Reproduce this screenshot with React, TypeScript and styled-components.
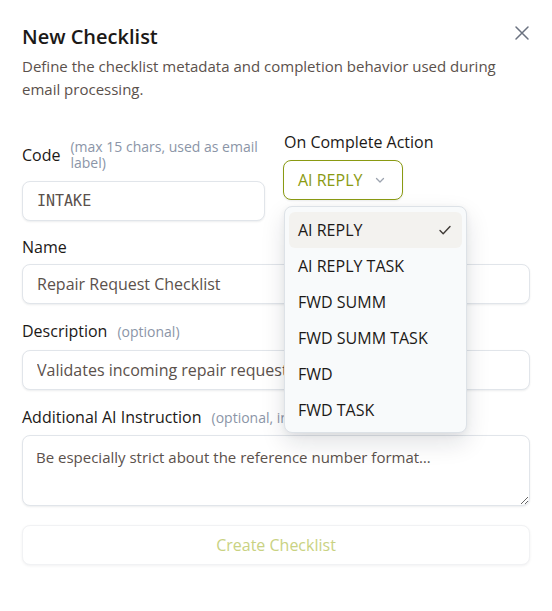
import styled, { createGlobalStyle } from 'styled-components'

const GlobalStyle = createGlobalStyle`
  html, body {
    margin: 0;
    padding: 0;
    background: #ffffff;
  }
  * {
    box-sizing: border-box;
  }
`

const accent = '#8a9a12'
const ink = '#1c1917'
const muted = '#5b514c'
const hintGray = '#8b95a7'
const line = '#e1e5ea'

const Dialog = styled.div`
  width: 552px;
  min-height: 611px;
  background: #ffffff;
  padding: 23px 22px 40px 22px;
  font-family: 'Open Sans', 'Noto Sans', sans-serif;
  color: ${ink};
  position: relative;
`

const Header = styled.div`
  display: flex;
  flex-direction: column;
  gap: 4px;
  margin-bottom: 30px;
`

const Title = styled.h2`
  margin: 0;
  font-size: 20px;
  line-height: 28px;
  font-weight: 600;
  color: ${ink};
`

const Subtitle = styled.p`
  margin: 0;
  font-size: 15px;
  line-height: 23px;
  color: ${muted};
`

const CloseButton = styled.button`
  position: absolute;
  top: 25px;
  right: 22px;
  width: 16px;
  height: 16px;
  padding: 0;
  border: none;
  background: none;
  color: #6b7280;
  display: flex;
  align-items: center;
  justify-content: center;
  cursor: pointer;
`

const Form = styled.div`
  display: flex;
  flex-direction: column;
  gap: 16px;
`

const TopRow = styled.div`
  display: grid;
  grid-template-columns: 243px 1fr;
  column-gap: 19px;
  align-items: start;
  margin-bottom: -1px;
`

const Field = styled.div<{ $gap?: number; $offset?: number }>`
  display: flex;
  flex-direction: column;
  gap: ${p => p.$gap ?? 6}px;
  margin-top: ${p => p.$offset ?? 0}px;
  position: relative;
`

const LabelRow = styled.div<{ $center?: boolean }>`
  display: flex;
  align-items: ${p => (p.$center ? 'center' : 'baseline')};
  gap: 10px;
  min-height: 22px;
`

const Label = styled.label`
  font-size: 16px;
  line-height: 22px;
  color: ${ink};
  white-space: nowrap;
`

const Hint = styled.span`
  font-size: 14px;
  line-height: 16px;
  color: ${hintGray};
`

const inputBase = `
  width: 100%;
  border: 1px solid ${line};
  border-radius: 8px;
  background: #ffffff;
  box-shadow: 0 1px 2px rgba(15, 23, 42, 0.08);
  outline: none;
`

const TextInput = styled.input<{ $mono?: boolean }>`
  ${inputBase}
  height: 40px;
  padding: 0 14px;
  font-family: ${p =>
    p.$mono ? "'DejaVu Sans Mono', 'Liberation Mono', monospace" : "'Open Sans', sans-serif"};
  font-size: ${p => (p.$mono ? 15 : 16)}px;
  color: ${muted};
`

const TextArea = styled.textarea`
  ${inputBase}
  height: 71px;
  padding: 10px 13px;
  font-family: 'Open Sans', sans-serif;
  font-size: 15px;
  line-height: 22px;
  color: ${muted};
  resize: vertical;
`

const SelectWrap = styled.div`
  position: relative;
  align-self: flex-start;
  margin-top: 1px;
`

const SelectButton = styled.button`
  height: 40px;
  display: flex;
  align-items: center;
  gap: 12px;
  padding: 0 16px 0 14px;
  border: 1px solid ${accent};
  border-radius: 8px;
  background: #ffffff;
  box-shadow: 0 1px 2px rgba(15, 23, 42, 0.08);
  font-family: 'Open Sans', sans-serif;
  font-size: 16px;
  color: ${accent};
  margin-left: -1px;
`

const Menu = styled.ul`
  position: absolute;
  top: 46px;
  left: 0;
  width: 183px;
  margin: 0;
  padding: 5px 4px 4px 4px;
  list-style: none;
  background: #f8fafb;
  border: 1px solid #dde2e7;
  border-radius: 8px;
  box-shadow: 0 10px 24px rgba(15, 23, 42, 0.12), 0 2px 6px rgba(15, 23, 42, 0.06);
  z-index: 10;
`

const MenuItem = styled.li<{ $active?: boolean }>`
  height: 36px;
  display: flex;
  align-items: center;
  justify-content: space-between;
  padding: 0 10px 0 9px;
  border-radius: 6px;
  font-size: 16px;
  color: ${ink};
  background: ${p => (p.$active ? '#f3f2ef' : 'transparent')};
`

const SubmitButton = styled.button`
  margin-top: 3px;
  height: 40px;
  width: 100%;
  border: 1px solid #f1f2f4;
  border-radius: 8px;
  background: #ffffff;
  box-shadow: 0 1px 3px rgba(15, 23, 42, 0.06);
  font-family: 'Open Sans', sans-serif;
  font-size: 16px;
  font-weight: 500;
  color: #c9d282;
`

const actions = ['AI REPLY', 'AI REPLY TASK', 'FWD SUMM', 'FWD SUMM TASK', 'FWD', 'FWD TASK']

export default function App() {
  const selected = 'AI REPLY'

  return (
    <>
      <GlobalStyle />
      <Dialog>
        <Header>
          <Title>New Checklist</Title>
          <Subtitle>
            Define the checklist metadata and completion behavior used during email processing.
          </Subtitle>
        </Header>
        <CloseButton aria-label="Close">
          <svg width="16" height="16" viewBox="0 0 16 16" fill="none" stroke="currentColor" strokeWidth="1.5" strokeLinecap="round">
            <path d="M2 2l12 12M14 2L2 14" />
          </svg>
        </CloseButton>

        <Form>
          <TopRow>
            <Field $gap={10} $offset={8}>
              <LabelRow $center>
                <Label>Code</Label>
                <Hint>(max 15 chars, used as email label)</Hint>
              </LabelRow>
              <TextInput $mono defaultValue="INTAKE" />
            </Field>
            <Field>
              <LabelRow>
                <Label>On Complete Action</Label>
              </LabelRow>
              <SelectWrap>
                <SelectButton>
                  {selected}
                  <svg width="12" height="12" viewBox="0 0 12 12" fill="none" stroke="#9ca3af" strokeWidth="1.3" strokeLinecap="round" strokeLinejoin="round">
                    <path d="M2.5 4.5L6 8l3.5-3.5" />
                  </svg>
                </SelectButton>
                <Menu>
                  {actions.map(a => (
                    <MenuItem key={a} $active={a === selected}>
                      {a}
                      {a === selected && (
                        <svg width="14" height="14" viewBox="0 0 14 14" fill="none" stroke="#3f3a36" strokeWidth="1.4" strokeLinecap="round" strokeLinejoin="round">
                          <path d="M2 7.5l3.2 3.2L12 3.5" />
                        </svg>
                      )}
                    </MenuItem>
                  ))}
                </Menu>
              </SelectWrap>
            </Field>
          </TopRow>

          <Field>
            <LabelRow>
              <Label>Name</Label>
            </LabelRow>
            <TextInput defaultValue="Repair Request Checklist" />
          </Field>

          <Field $gap={8}>
            <LabelRow>
              <Label>Description</Label>
              <Hint>(optional)</Hint>
            </LabelRow>
            <TextInput defaultValue="Validates incoming repair requests for completeness" />
          </Field>

          <Field $gap={7}>
            <LabelRow>
              <Label>Additional AI Instruction</Label>
              <Hint>(optional, included in the AI prompt)</Hint>
            </LabelRow>
            <TextArea defaultValue="Be especially strict about the reference number format…" />
          </Field>

          <SubmitButton disabled>Create Checklist</SubmitButton>
        </Form>
      </Dialog>
    </>
  )
}
